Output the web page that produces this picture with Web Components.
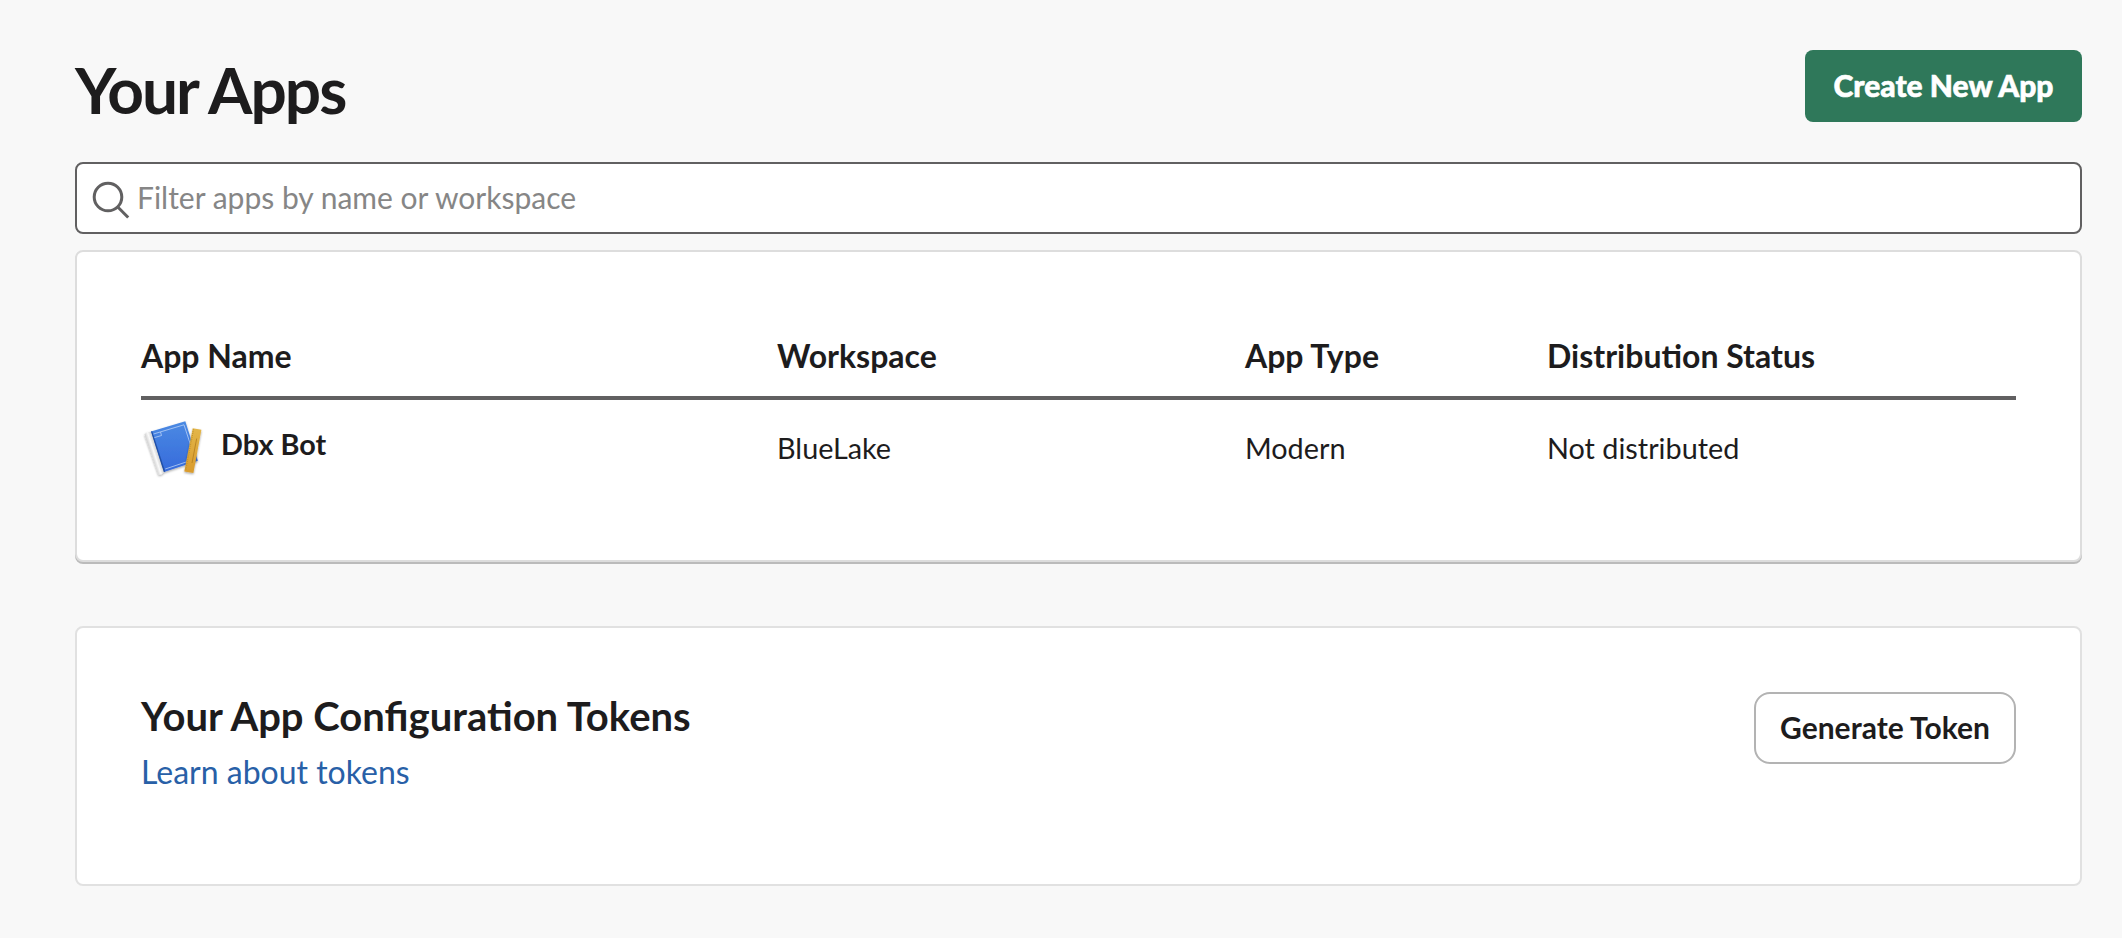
<!DOCTYPE html>
<html lang="en">
<head>
<meta charset="utf-8">
<title>Your Apps</title>
<style>
  body { margin: 0; background: #f8f8f8; color: #1d1c1d; font-family: Lato, sans-serif; font-size: 30px; -webkit-font-smoothing: antialiased; }
</style>
</head>
<body>
<apps-page></apps-page>
<script>
const define = (name, html) => customElements.define(name, class extends HTMLElement {
  constructor() {
    super();
    this.attachShadow({ mode: "open" }).innerHTML = html;
  }
});

define("app-button", `
<style>
  :host { display: block; flex: none; }
  button { box-sizing: border-box; display: flex; align-items: center; justify-content: center; width: 277px; height: 72px; padding: 0 0 2px; border: 0;
    border-radius: 8px; background: #2f785a; color: #fff; font: 900 30px/40px Lato, sans-serif; white-space: nowrap; -webkit-text-stroke: 0.6px #fff; }
  :host([outline]) button { width: 262px; border: 2px solid #b3b3b3; border-radius: 16px; background: #fff; color: #1d1c1d; font-weight: 700; -webkit-text-stroke: 0; }
</style>
<button><slot></slot></button>`);

define("search-field", `
<style>
  :host { box-sizing: border-box; display: flex; align-items: center; height: 72px; border: 2px solid #616061; border-radius: 8px;
    background: #fff; color: #868686; padding-left: 13px; }
  svg { flex: none; width: 42px; height: 42px; margin-top: 3px; }
  span { margin-left: 5px; line-height: 40px; padding-bottom: 2px; }
</style>
<svg viewBox="0 0 42 42" fill="none" stroke="#616061" stroke-width="3">
  <circle cx="18" cy="18" r="13.8"/><path d="M27.5 27.8 L38.2 38.5"/>
</svg>
<span><slot></slot></span>`);

define("app-card", `
<style>
  :host { box-sizing: border-box; display: block; border: 2px solid #e1e1e1; border-radius: 8px; background: #fff; padding: 64px; }
  :host([raised]) { border-color: #ddd; box-shadow: 0 2px 0 #bbb; }
</style>
<slot></slot>`);

define("blueprint-icon", `
<style>:host { display: block; width: 64px; height: 64px; } svg { display: block; overflow: visible; }</style>
<svg width="64" height="64" viewBox="0 0 64 64">
  <defs>
    <linearGradient id="sheet" x1="0" y1="0" x2="0" y2="1"><stop offset="0" stop-color="#4b8ae3"/><stop offset="1" stop-color="#366adb"/></linearGradient>
    <linearGradient id="ruler" x1="0" y1="0" x2="0" y2="1"><stop offset="0" stop-color="#e3b648"/><stop offset="1" stop-color="#d99b2d"/></linearGradient>
    <linearGradient id="roll" gradientUnits="userSpaceOnUse" x1="10" y1="38" x2="18" y2="35.4"><stop offset="0" stop-color="#d2d2d2"/><stop offset=".4" stop-color="#fafafa"/><stop offset="1" stop-color="#bdbdbd"/></linearGradient>
    <filter id="shade" x="-20%" y="-20%" width="140%" height="140%"><feDropShadow dx="0" dy="1.2" stdDeviation="1" flood-opacity=".35"/></filter>
  </defs>
  <g filter="url(#shade)">
    <path fill="url(#sheet)" d="M10 15.5 L44.3 5.3 L56.9 44.8 L23 56 Z"/>
    <path fill="url(#roll)" d="M3.5 18.2 Q6 15.6 9.7 15.8 L22.8 55.6 Q21.8 58.8 17.5 58.8 Z"/>
  </g>
  <path fill="#204fa6" d="M10 15.6 L11.2 15.2 L24.2 55.6 L22.8 56 Z"/>
  <path fill="none" stroke="#b7d1f6" stroke-width=".8" d="M12.5 18 L43 8.8 L54.2 43 L24.2 53 M13.4 21.6 L20.5 19.5 L19.5 16"/>
  <path filter="url(#shade)" fill="url(#ruler)" d="M51.7 12.3 L60.4 13.8 L52.4 57 L43.3 55.6 Z"/>
  <path fill="none" stroke="#b17c1e" stroke-width=".8" d="M55.7 22.5 L51 47"/>
  <path fill="none" stroke="#b98a2a" stroke-width="1.2" stroke-dasharray=".7 1.2" d="M52.5 13.5 L44.6 54.6"/>
</svg>`);

define("apps-table", `
<style>
  :host { display: grid; grid-template-columns: 636px 468px 302px 1fr; }
  .h { font-size: 32px; line-height: 40px; font-weight: 700; height: 84px; box-sizing: border-box; padding-top: 20px; border-bottom: 4px solid #616061; }
  .c { font-size: 28.8px; line-height: 40px; padding-top: 28px; white-space: nowrap; }
  .n { display: flex; gap: 16px; padding-top: 16px; font-weight: 700; }
  .n span { padding-top: 8px; }
</style>
<div class="h">App Name</div><div class="h">Workspace</div><div class="h">App Type</div><div class="h">Distribution Status</div>
<div class="c n"><blueprint-icon></blueprint-icon><span>Dbx Bot</span></div>
<div class="c">BlueLake</div><div class="c">Modern</div><div class="c">Not distributed</div>`);

define("token-panel", `
<style>
  :host { display: flex; justify-content: space-between; align-items: flex-start; }
  h2 { margin: 0; font-size: 40px; line-height: 48px; font-weight: 700; }
  a { display: block; margin-top: 8px; font-size: 32px; line-height: 48px; color: #2860a7; }
</style>
<div><h2>Your App Configuration Tokens</h2><a>Learn about tokens</a></div>
<app-button outline>Generate Token</app-button>`);

define("apps-page", `
<style>
  :host { display: block; padding: 50px 40px 0 75px; }
  header { display: flex; justify-content: space-between; align-items: flex-start; height: 112px; }
  h1 { margin: 0; font-size: 64px; line-height: 80px; letter-spacing: -2px; font-weight: 700; }
  .list { margin-top: 16px; height: 312px; }
  .tokens { margin-top: 64px; height: 260px; }
</style>
<header><h1>Your Apps</h1><app-button>Create New App</app-button></header>
<search-field>Filter apps by name or workspace</search-field>
<app-card class="list" raised><apps-table></apps-table></app-card>
<app-card class="tokens"><token-panel></token-panel></app-card>`);
</script>
</body>
</html>
